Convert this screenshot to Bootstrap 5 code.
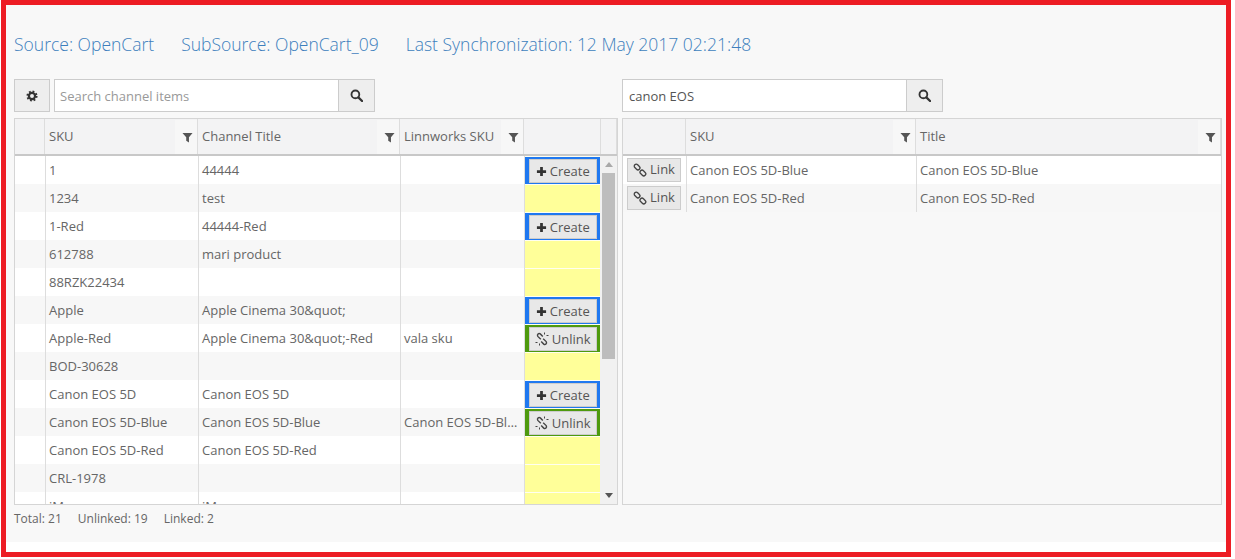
<!DOCTYPE html>
<html lang="en">
<head>
  <meta charset="UTF-8">
  <title>Channel Items</title>
  <link href="https://cdn.jsdelivr.net/npm/bootstrap@5.3.2/dist/css/bootstrap.min.css" rel="stylesheet">
  <style>
    body { background: #fff; font-family: "Open Sans", "Liberation Sans", sans-serif; font-size: 13px; color: #666; }
    .frame { width: 1230px; height: 557px; margin-left: 1px; border: 5px solid #ed1c24; }
    .panel-bg { height: 537px; background: #f8f8f8; padding: 0 4px 0 8px; }
    .src-line { height: 74px; padding-top: 27px; gap: 27px; font-size: 17.5px; font-weight: 300; color: #3d7fbd; line-height: 24px; }
    .tool-row { height: 33px; gap: 4px; }
    .side-l { width: 604px; }
    .side-r { width: 600px; margin-left: 4px; }
    .tool-btn { width: 37px; height: 33px; padding: 0; background: #eeeeee; border: 1px solid #ccc; border-radius: 0; color: #333; }
    .tool-btn.gear-btn { width: 36px; }
    .tool-btn svg { display: block; margin: 0 auto; }
    .tool-input { width: 284px; height: 33px; border: 1px solid #ccc; border-right: 0; border-radius: 0; font-size: 13px; color: #555; padding: 0 6px; }
    .tool-input.search-left { padding-left: 5px; }
    .tool-input::placeholder { color: #999; }
    .grid-box { height: 387px; margin-top: 6px; border: 1px solid #d5d5d5; background: #f8f8f8; overflow: hidden; }
    .grid-tbl { table-layout: fixed; border-collapse: collapse; }
    .grid-tbl td, .grid-tbl th { padding: 2px 4px 0 3.5px; height: 28px; font-weight: 400; font-size: 13px; color: #666; white-space: nowrap; overflow: hidden; text-overflow: ellipsis; border-right: 1px solid #ddd; background: #fff; }
    .grid-tbl tr:nth-child(even) td { background: #f7f7f7; }
    .head-row { height: 37px; background: #f3f3f4; border-bottom: 2px solid #c8c8c8; }
    .head-cell { height: 35px; padding-left: 4px; padding-top: 1px; border-right: 1px solid #ddd; }
    .filter-zone { width: 22px; height: 34px; padding-right: 4px; background: #f7f7f7; }
    .grid-tbl td.act { padding: 1px 0 0; background: #ffff99 !important; box-shadow: inset 0 1px 0 #fffff0; border-right: 0; }
    .act-blue, .act-green { height: 27px; padding: 2px 4px 1px; }
    .act-blue { background: #1f78f0; }
    .act-green { background: #4e9a0e; }
    .row-btn { height: 24px; width: 100%; padding: 0; font-size: 13px; line-height: 21px; color: #555; background: #e8e8e8; border: 1px solid #ccc; border-radius: 0; gap: 3px; }
    .link-btn { height: 24px; width: 54px; padding: 0; font-size: 13px; color: #555; background: #e8e8e8; border: 1px solid #ccc; border-radius: 0; gap: 3px; }
    .grid-tbl td.link-cell { padding: 0 4px; border-right: 1px solid #ddd; }
    .scroll-track { width: 17px; height: 348px; background: #f1f1f1; padding: 0 2px; }
    .scroll-thumb { width: 13px; height: 186px; background: #bdbdbd; }
    .arrow-up, .arrow-dn { width: 13px; height: 17px; }
    .rows-clip { height: 348px; }
    .stat-line { gap: 16px; height: 26px; padding-top: 5px; font-size: 12px; line-height: 17px; }
  </style>
</head>
<body class="m-0">
  <svg width="0" height="0" class="position-absolute">
    <symbol id="i-filter" viewBox="0 0 12 12"><path d="M.5 1h11L7.600 5.600V11.500L4.600 9.500V5.600z"/></symbol>
    <symbol id="i-search" viewBox="0 0 14 14"><circle cx="5.800" cy="5.800" r="4.200" fill="none" stroke="currentColor" stroke-width="2"/><path d="M9 9l4 4" stroke="currentColor" stroke-width="2.400" stroke-linecap="round"/></symbol>
    <symbol id="i-gear" viewBox="0 0 14 14"><circle cx="7" cy="7" r="3.600" fill="none" stroke="currentColor" stroke-width="2.600"/><circle cx="7" cy="7" r="5.400" fill="none" stroke="currentColor" stroke-width="2.200" stroke-dasharray="2.100 2.140"/></symbol>
    <symbol id="i-plus" viewBox="0 0 12 12"><path d="M4.500 1h3v3.500H11v3H7.500V11h-3V7.500H1v-3h3.500z"/></symbol>
    <symbol id="i-link" viewBox="0 0 14 14"><g fill="none" stroke="currentColor" stroke-width="1.300"><rect x=".9" y="2" width="6.400" height="4" rx="2" transform="rotate(45 4.100 4)"/><rect x="6.700" y="8" width="6.400" height="4" rx="2" transform="rotate(45 9.900 10)"/></g></symbol>
    <symbol id="i-unlink" viewBox="0 0 14 14"><g fill="none" stroke="currentColor" stroke-width="1.400"><path d="M5.800 7.200L2.800 4.400a1.800 1.800 0 0 1 2.500-2.500L7.800 4.400"/><path d="M8.200 6.800L11.200 9.600a1.800 1.800 0 0 1-2.500 2.500L6.200 9.600"/><path d="M9.500.5v2M11.500 3.500h2M.5 10.500h2M4.500 11.500v2" stroke-width="1"/></g></symbol>
  </svg>

  <div class="frame">
    <div class="panel-bg">
      <div class="src-line d-flex">
        <span>Source: OpenCart</span>
        <span>SubSource: OpenCart_09</span>
        <span>Last Synchronization: 12 May 2017 02:21:48</span>
      </div>

      <div class="d-flex">
        <div class="side-l">
          <div class="tool-row d-flex">
            <button class="tool-btn gear-btn btn" type="button"><svg width="12" height="12"><use href="#i-gear"/></svg></button>
            <div class="d-flex">
              <input class="tool-input search-left form-control" type="text" placeholder="Search channel items">
              <button class="tool-btn btn" type="button"><svg width="13" height="13"><use href="#i-search"/></svg></button>
            </div>
          </div>
          <div class="grid-box">
            <div class="head-row d-flex" id="left-head"></div>
            <div class="d-flex">
              <div class="rows-clip overflow-hidden">
                <table class="grid-tbl" style="width:586px">
                  <colgroup><col style="width:30px"><col style="width:153px"><col style="width:202px"><col style="width:124px"><col style="width:77px"></colgroup>
                  <tbody id="left-rows"></tbody>
                </table>
              </div>
              <div class="scroll-track d-flex flex-column">
                <div class="arrow-up d-flex align-items-center justify-content-center"><svg width="8" height="5"><path d="M4 0l4 5H0z" fill="#a9a9a9"/></svg></div>
                <div class="scroll-thumb"></div>
                <div class="arrow-dn d-flex align-items-center justify-content-center mt-auto"><svg width="8" height="5"><path d="M0 0h8L4 5z" fill="#555"/></svg></div>
              </div>
            </div>
          </div>
          <div class="stat-line d-flex">
            <span>Total: 21</span>
            <span>Unlinked: 19</span>
            <span>Linked: 2</span>
          </div>
        </div>

        <div class="side-r">
          <div class="tool-row d-flex">
            <div class="d-flex">
              <input class="tool-input form-control" type="text" value="canon EOS">
              <button class="tool-btn btn" type="button"><svg width="13" height="13"><use href="#i-search"/></svg></button>
            </div>
          </div>
          <div class="grid-box">
            <div class="head-row d-flex" id="right-head"></div>
            <table class="grid-tbl" style="width:598px">
              <colgroup><col style="width:63px"><col style="width:230px"><col style="width:305px"></colgroup>
              <tbody id="right-rows"></tbody>
            </table>
          </div>
        </div>
      </div>
    </div>
  </div>

  <script>
    const leftCols = [[30, ''], [153, 'SKU'], [202, 'Channel Title'], [124, 'Linnworks SKU'], [77, ''], [16, '']];
    const rightCols = [[63, ''], [230, 'SKU'], [305, 'Title']];

    const leftRows = [
      ['1', '44444', '', 'create'],
      ['1234', 'test', '', ''],
      ['1-Red', '44444-Red', '', 'create'],
      ['612788', 'mari product', '', ''],
      ['88RZK22434', '', '', ''],
      ['Apple', 'Apple Cinema 30&quot;', '', 'create'],
      ['Apple-Red', 'Apple Cinema 30&quot;-Red', 'vala sku', 'unlink'],
      ['BOD-30628', '', '', ''],
      ['Canon EOS 5D', 'Canon EOS 5D', '', 'create'],
      ['Canon EOS 5D-Blue', 'Canon EOS 5D-Blue', 'Canon EOS 5D-Blue', 'unlink'],
      ['Canon EOS 5D-Red', 'Canon EOS 5D-Red', '', ''],
      ['CRL-1978', '', '', ''],
      ['iMac', 'iMac', '', '']
    ];
    const rightRows = ['Canon EOS 5D-Blue', 'Canon EOS 5D-Red'];

    function esc(s) { return s.replace(/&/g, '&amp;'); }

    function fillHead(id, cols) {
      document.getElementById(id).innerHTML = cols.map(([w, label]) => {
        const icon = label ? '<div class="filter-zone d-flex align-items-center justify-content-end"><svg width="11" height="11" fill="#555"><use href="#i-filter"/></svg></div>' : '';
        return `<div class="head-cell d-flex justify-content-between align-items-center flex-shrink-0" style="width:${w}px"><span>${label}</span>${icon}</div>`;
      }).join('');
    }
    fillHead('left-head', leftCols);
    fillHead('right-head', rightCols);

    function actionCell(kind) {
      if (kind === 'create') return '<div class="act-blue"><button class="row-btn btn d-flex align-items-center justify-content-center" type="button"><svg width="11" height="11" fill="#333"><use href="#i-plus"/></svg>Create</button></div>';
      if (kind === 'unlink') return '<div class="act-green"><button class="row-btn btn d-flex align-items-center justify-content-center" type="button"><svg width="14" height="14" color="#444"><use href="#i-unlink"/></svg>Unlink</button></div>';
      return '';
    }

    document.getElementById('left-rows').innerHTML = leftRows.map(r =>
      `<tr><td></td><td>${esc(r[0])}</td><td>${esc(r[1])}</td><td>${esc(r[2])}</td><td class="act">${actionCell(r[3])}</td></tr>`
    ).join('');

    document.getElementById('right-rows').innerHTML = rightRows.map(t =>
      `<tr><td class="link-cell"><button class="link-btn btn d-flex align-items-center justify-content-center" type="button"><svg width="14" height="14" color="#444"><use href="#i-link"/></svg>Link</button></td><td>${t}</td><td>${t}</td></tr>`
    ).join('');
  </script>
  <script src="https://cdn.jsdelivr.net/npm/bootstrap@5.3.2/dist/js/bootstrap.bundle.min.js"></script>
</body>
</html>
